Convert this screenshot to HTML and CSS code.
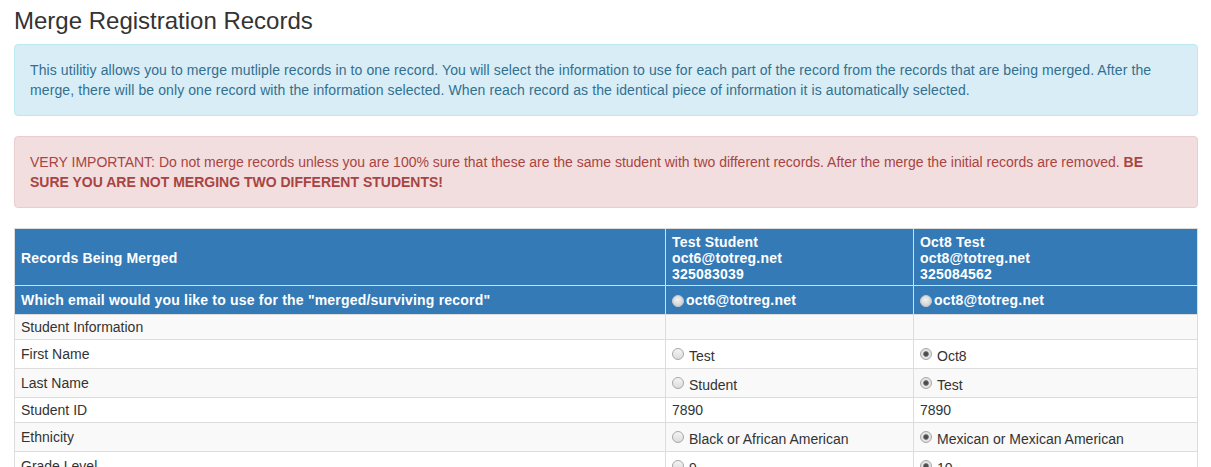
FILE: index.html
```html
<!DOCTYPE html>
<html lang="en">
<head>
<meta charset="utf-8">
<title>Merge Registration Records</title>
<link rel="stylesheet" href="styles.css">
</head>
<body>
<div class="page">
  <h3 class="title">Merge Registration Records</h3>
  <div class="alert alert-info">This utilitiy allows you to merge mutliple records in to one record. You will select the information to use for each part of the record from the records that are being merged. After the merge, there will be only one record with the information selected. When reach record as the identical piece of information it is automatically selected.</div>
  <div class="alert alert-danger">VERY IMPORTANT: Do not merge records unless you are 100% sure that these are the same student with two different records. After the merge the initial records are removed. <strong>BE SURE YOU ARE NOT MERGING TWO DIFFERENT STUDENTS!</strong></div>
  <table class="merge">
    <colgroup><col class="col-label"><col class="col-a"><col class="col-b"></colgroup>
    <thead>
      <tr class="head-main">
        <th class="mid">Records Being Merged</th>
        <th>Test Student<br>oct6@totreg.net<br>325083039</th>
        <th>Oct8 Test<br>oct8@totreg.net<br>325084562</th>
      </tr>
      <tr class="head-email">
        <th>Which email would you like to use for the "merged/surviving record"</th>
        <th><label class="opt"><input type="radio" name="email" class="rb rb-head">oct6@totreg.net</label></th>
        <th><label class="opt"><input type="radio" name="email" class="rb rb-head">oct8@totreg.net</label></th>
      </tr>
    </thead>
    <tbody>
      <tr class="odd"><td>Student Information</td><td></td><td></td></tr>
      <tr><td>First Name</td><td><label class="opt"><input type="radio" name="fn" class="rb">Test</label></td><td><label class="opt"><input type="radio" name="fn" class="rb" checked>Oct8</label></td></tr>
      <tr class="odd"><td>Last Name</td><td><label class="opt"><input type="radio" name="ln" class="rb">Student</label></td><td><label class="opt"><input type="radio" name="ln" class="rb" checked>Test</label></td></tr>
      <tr><td>Student ID</td><td>7890</td><td>7890</td></tr>
      <tr class="odd"><td>Ethnicity</td><td><label class="opt"><input type="radio" name="eth" class="rb">Black or African American</label></td><td><label class="opt"><input type="radio" name="eth" class="rb" checked>Mexican or Mexican American</label></td></tr>
      <tr><td>Grade Level</td><td><label class="opt"><input type="radio" name="gr" class="rb">9</label></td><td><label class="opt"><input type="radio" name="gr" class="rb" checked>10</label></td></tr>
    </tbody>
  </table>
</div>
</body>
</html>
```

FILE: styles.css
```css
html, body {
  margin: 0;
  padding: 0;
  background: #fff;
}
body {
  font-family: "Liberation Sans", Arial, Helvetica, sans-serif;
  font-size: 14px;
  line-height: 20px;
  color: #333;
}
.page {
  padding: 0 13px 0 14px;
}
.title {
  font-size: 24px;
  font-weight: normal;
  line-height: 1.1;
  margin: 8px 0 10px;
  color: #333;
}
.alert {
  padding: 15px;
  border: 1px solid transparent;
  border-radius: 4px;
  margin-bottom: 20px;
}
.alert-info {
  color: #31708f;
  background: #d9edf7;
  border-color: #bce8f1;
  letter-spacing: 0.1px;
}
.alert-danger {
  color: #a94442;
  background: #f2dede;
  border-color: #ebccd1;
}
.alert strong { font-weight: bold; }

.merge {
  width: 100%;
  border-collapse: collapse;
  table-layout: fixed;
  border: 1px solid #ddd;
}
.col-label { width: 651px; }
.col-a { width: 248px; }
.merge th, .merge td {
  border: 1px solid #ddd;
  text-align: left;
  padding: 2px 6px;
  vertical-align: middle;
}
.merge thead th {
  background: #337ab7;
  color: #fff;
  font-weight: bold;
  letter-spacing: 0.2px;
}
.head-main th {
  line-height: 16px;
  padding: 5px 6px 3px;
  vertical-align: top;
}
.head-main th.mid { vertical-align: middle; }
.head-email th {
  padding: 4px 6px;
  line-height: 20px;
}
.merge tbody tr { background: #fff; }
.merge tbody tr.odd { background: #f9f9f9; }

.opt { cursor: pointer; }
.rb {
  -webkit-appearance: none;
  appearance: none;
  width: 12px;
  height: 12px;
  border-radius: 50%;
  border: 1px solid #a8a8a8;
  background: linear-gradient(180deg, #f4f4f4 0%, #dcdcdc 100%);
  margin: 6px 5px 1px 0;
  padding: 0;
  vertical-align: baseline;
  box-sizing: border-box;
  display: inline-block;
}
.rb:checked {
  background: radial-gradient(circle at 50% 50%, #444 0, #555 2px, #888 2.6px, #e8e8e8 3.2px, #d4d4d4 100%);
}
.rb-head {
  border: 1px solid #c8c8c8;
  background: radial-gradient(circle at 45% 40%, #f2f2f2 0, #dadada 55%, #bdbdbd 100%);
  margin: 0 2px 0 0;
  vertical-align: -2px;
}
```
